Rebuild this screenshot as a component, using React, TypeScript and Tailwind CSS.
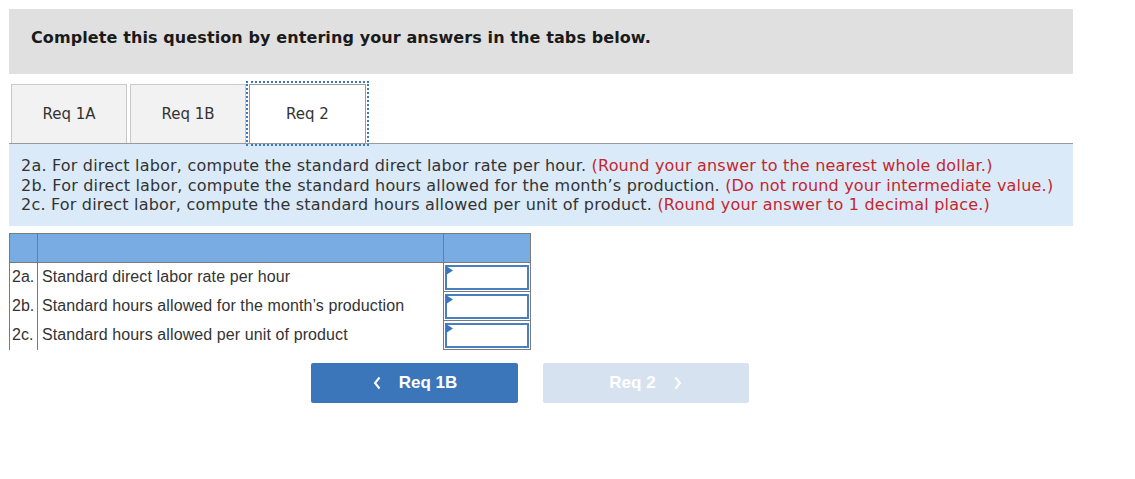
import React from 'react';

const rows = [
  { id: '2a.', label: 'Standard direct labor rate per hour' },
  { id: '2b.', label: 'Standard hours allowed for the month\u2019s production' },
  { id: '2c.', label: 'Standard hours allowed per unit of product' },
];

const tabs = ['Req 1A', 'Req 1B', 'Req 2'];

const App: React.FC = () => {
  return (
    <div className="w-[1135px] h-[479px] bg-white pt-[9px] pl-[9px] font-['DejaVu_Sans',sans-serif] text-[#222]">
      <div className="w-[1064px] h-[65px] bg-[#e0e0e0] pl-[22px] pt-[17px]">
        <span className="text-[16px] font-bold leading-[19px] tracking-[0.1px] text-[#1a1a1a]">
          Complete this question by entering your answers in the tabs below.
        </span>
      </div>

      <div className="mt-[10px] flex gap-[3px] pl-[2px] h-[59px]">
        {tabs.map((t, i) => {
          const active = i === 2;
          return (
            <div
              key={t}
              className={`h-[59px] flex items-center justify-center text-[15px] text-[#333] border border-b-0 ${
                active
                  ? 'w-[117px] bg-white border-[#9a9a9a] outline-2 outline-dotted outline-[#3a78c0] outline-offset-[1px]'
                  : 'w-[116px] bg-[#f2f2f2] border-[#c9c9c9]'
              }`}
            >
              {t}
            </div>
          );
        })}
      </div>

      <div className="w-[1064px] h-[83px] bg-[#dbeaf8] border-t border-[#9a9a9a] pl-[12px] pt-[12px] text-[16px] leading-[19.5px] tracking-[0.2px] text-[#333]">
        <div>
          2a. For direct labor, compute the standard direct labor rate per hour.{' '}
          <span className="text-[#c4262e]">(Round your answer to the nearest whole dollar.)</span>
        </div>
        <div>
          2b. For direct labor, compute the standard hours allowed for the month’s production.{' '}
          <span className="text-[#c4262e]">(Do not round your intermediate value.)</span>
        </div>
        <div>
          2c. For direct labor, compute the standard hours allowed per unit of product.{' '}
          <span className="text-[#c4262e]">(Round your answer to 1 decimal place.)</span>
        </div>
      </div>

      <table className="mt-[7px] border-collapse font-['Liberation_Sans',Arial,sans-serif] text-[16px] text-[#333]">
        <thead>
          <tr className="h-[29px] bg-[#78ace3]">
            <th className="w-[28px] border border-[#7a7a7a] p-0"></th>
            <th className="w-[406px] border border-[#7a7a7a] p-0"></th>
            <th className="w-[87px] border border-[#7a7a7a] p-0"></th>
          </tr>
        </thead>
        <tbody>
          {rows.map((r) => (
            <tr key={r.id} className="h-[29px]">
              <td className="border-l border-r border-[#7a7a7a] pl-[2px] pr-0 py-0 align-middle leading-[18px]">{r.id}</td>
              <td className="border-r border-[#7a7a7a] pl-[4px] py-0 align-middle leading-[18px] tracking-[0.1px]">{r.label}</td>
              <td className="border border-[#7a7a7a] p-0">
                <div className="relative m-px h-[25px] border-2 border-[#4a7ec4] bg-white">
                  <svg className="absolute left-[-1px] top-[-1px]" width="7" height="9" viewBox="0 0 7 9">
                    <path d="M0 0 L7 4.5 L0 9 Z" fill="#3a76c0" />
                  </svg>
                </div>
              </td>
            </tr>
          ))}
        </tbody>
      </table>

      <div className="mt-[13px] flex gap-[25px] pl-[302px] font-['Liberation_Sans',Arial,sans-serif]">
        <button className="w-[207px] h-[40px] rounded-[2px] bg-[#3a76b9] text-white text-[17px] font-bold flex items-center justify-center gap-[17px]">
          <svg width="10" height="16" viewBox="0 0 10 16">
            <path d="M7.5 2.5 L3 8 L7.5 13.5" stroke="white" strokeWidth="2" fill="none" />
          </svg>
          <span>Req 1B</span>
        </button>
        <button className="w-[206px] h-[40px] rounded-[2px] bg-[#d7e2f0] text-white text-[17px] font-bold flex items-center justify-center gap-[17px]">
          <span>Req 2</span>
          <svg width="10" height="16" viewBox="0 0 10 16">
            <path d="M2.5 2.5 L7 8 L2.5 13.5" stroke="white" strokeWidth="2" fill="none" />
          </svg>
        </button>
      </div>
    </div>
  );
};

export default App;
